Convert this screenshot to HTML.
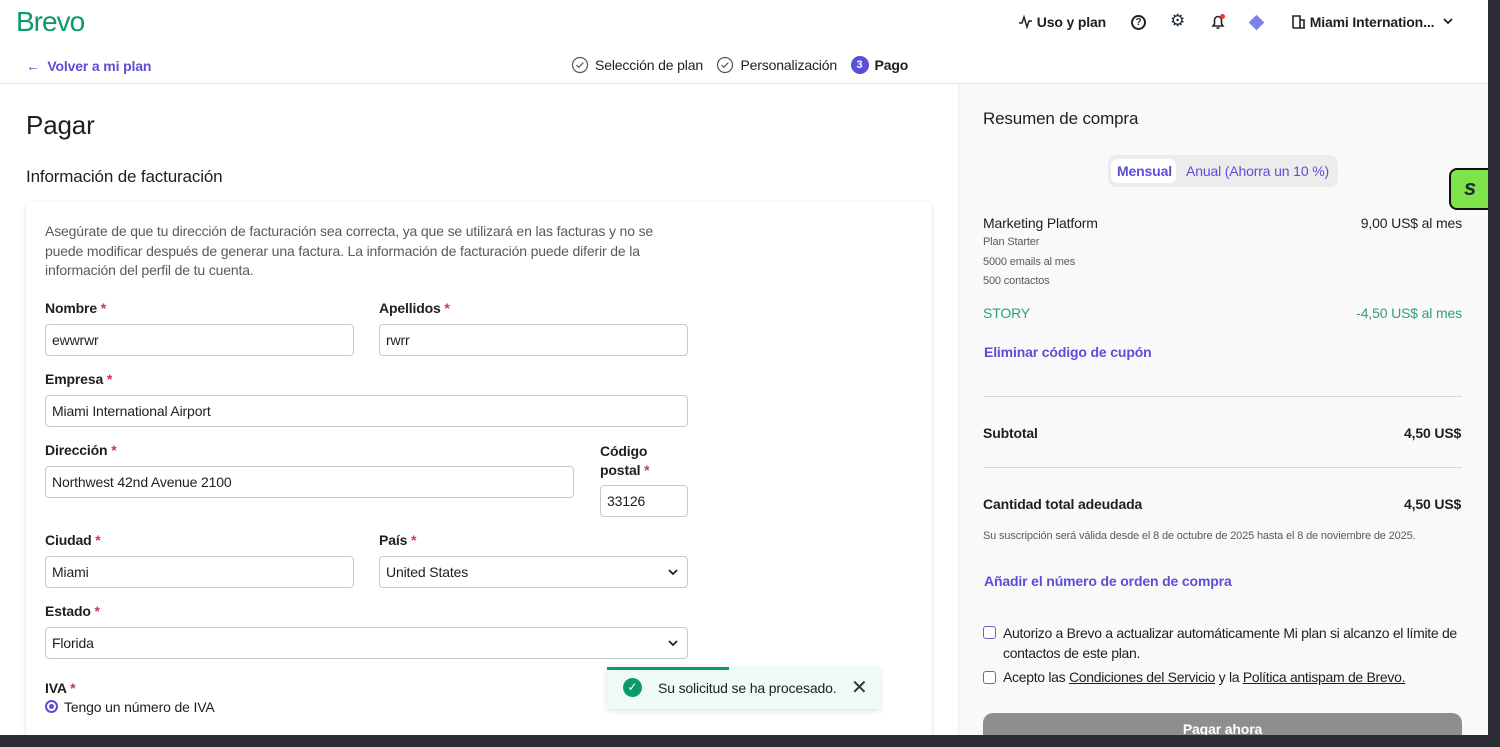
<!DOCTYPE html><html><head><meta charset="utf-8"><style>
*{box-sizing:border-box;margin:0;padding:0}
html,body{width:1500px;height:747px;overflow:hidden}
body{font-family:"Liberation Sans",sans-serif;color:#1f2937;background:#fff;position:relative;font-size:14px;letter-spacing:-0.15px}
.a{position:absolute}
.lbl{font-weight:bold;font-size:14px;color:#1f1f1f}
.lbl i{color:#d6334a;font-style:normal}
.inp{position:absolute;height:32px;border:1px solid #c9c9c9;border-radius:4px;padding:0 6px;line-height:30px;font-size:14px;color:#1f1f1f;background:#fff}
.chev{position:absolute;right:8px;top:9px}
.p{color:#5b4fd6;font-weight:bold}
</style></head><body>
<div class="a" style="left:16px;top:6px;font-size:28px;color:#0b996e;letter-spacing:-1px">Brevo</div>
<div class="a" style="left:26px;top:58px;font-size:14px" ><span class="p">&larr;&nbsp; Volver a mi plan</span></div>
<div class="a" style="left:571px;top:56px;font-size:14px;color:#1f1f1f;display:flex;align-items:center;gap:6px">
<svg width="18" height="18"><circle cx="9" cy="9" r="7.5" fill="none" stroke="#555" stroke-width="1.2"/><path d="M5.5 9l2.3 2.3 4.5-4.6" fill="none" stroke="#555" stroke-width="1.2"/></svg> Selección de plan&nbsp;&nbsp;
<svg width="18" height="18"><circle cx="9" cy="9" r="7.5" fill="none" stroke="#555" stroke-width="1.2"/><path d="M5.5 9l2.3 2.3 4.5-4.6" fill="none" stroke="#555" stroke-width="1.2"/></svg> Personalización&nbsp;&nbsp;
<span style="width:18px;height:18px;border-radius:9px;background:#5b4fd6;color:#fff;font-size:11px;font-weight:bold;text-align:center;line-height:18px">3</span> <b>Pago</b></div>
<div class="a" style="left:1018px;top:14px;font-size:14px;font-weight:bold;color:#1f1f1f"><svg width="15" height="14" style="vertical-align:-2px"><path d="M1 8h3l2-6 3 10 2-6h3" fill="none" stroke="#222" stroke-width="1.5"/></svg> Uso y plan</div>
<div class="a" style="left:1131px;top:15px;width:15px;height:15px;border:2px solid #222;border-radius:50%;font-size:10px;text-align:center;line-height:11px;font-weight:bold">?</div>
<div class="a" style="left:1170px;top:11px;font-size:17px">⚙</div>
<svg class="a" style="left:1210px;top:14px" width="16" height="16"><path d="M3 12h10l-1.5-2V6a3.5 3.5 0 0 0-7 0v4z" fill="none" stroke="#222" stroke-width="1.6"/><path d="M6.5 14h3" stroke="#222" stroke-width="1.6"/></svg>
<div class="a" style="left:1220px;top:14px;width:5px;height:5px;border-radius:3px;background:#e33"></div>
<div class="a" style="left:1251px;top:17px;width:11px;height:11px;background:#7b82f0;transform:rotate(45deg)"></div>
<div class="a" style="left:1292px;top:14px;font-size:14px;font-weight:bold;color:#1f1f1f"><svg width="14" height="14" style="vertical-align:-2px"><path d="M1 13V1h7v12M8 5h4v8M1 13h12" fill="none" stroke="#222" stroke-width="1.6"/></svg> Miami Internation... &nbsp;<svg width="12" height="12"><path d="M2 4l4 4 4-4" fill="none" stroke="#222" stroke-width="1.8"/></svg></div>
<div class="a" style="left:0;top:83px;width:1488px;height:1px;background:#e2e2e2"></div>
<div class="a" style="left:958px;top:84px;width:530px;height:651px;background:#f9f9f9;border-left:1px solid #ececec"></div>
<div class="a" style="left:26px;top:110px;font-size:26px;color:#1f1f1f">Pagar</div>
<div class="a" style="left:26px;top:167px;font-size:17px;color:#1f1f1f">Información de facturación</div>
<div class="a" style="left:26px;top:202px;width:906px;height:540px;background:#fff;border-radius:6px;box-shadow:0 1px 4px rgba(0,0,0,.15)"></div>
<div class="a" style="left:45px;top:222px;width:620px;font-size:14px;line-height:19.5px;color:#5a5a5a">Asegúrate de que tu dirección de facturación sea correcta, ya que se utilizará en las facturas y no se puede modificar después de generar una factura. La información de facturación puede diferir de la información del perfil de tu cuenta.</div>
<div class="a lbl" style="left:45px;top:300px">Nombre <i>*</i></div>
<div class="inp" style="left:45px;top:324px;width:309px">ewwrwr</div>
<div class="a lbl" style="left:379px;top:300px">Apellidos <i>*</i></div>
<div class="inp" style="left:379px;top:324px;width:309px">rwrr</div>
<div class="a lbl" style="left:45px;top:371px">Empresa <i>*</i></div>
<div class="inp" style="left:45px;top:395px;width:643px">Miami International Airport</div>
<div class="a lbl" style="left:45px;top:442px">Dirección <i>*</i></div>
<div class="inp" style="left:45px;top:466px;width:529px">Northwest 42nd Avenue 2100</div>
<div class="a lbl" style="left:600px;top:442px;line-height:19px">Código<br>postal <i>*</i></div>
<div class="inp" style="left:600px;top:485px;width:88px">33126</div>
<div class="a lbl" style="left:45px;top:532px">Ciudad <i>*</i></div>
<div class="inp" style="left:45px;top:556px;width:309px">Miami</div>
<div class="a lbl" style="left:379px;top:532px">País <i>*</i></div>
<div class="inp" style="left:379px;top:556px;width:309px">United States<svg class="chev" width="12" height="12"><path d="M2 4l4 4 4-4" fill="none" stroke="#222" stroke-width="1.8"/></svg></div>
<div class="a lbl" style="left:45px;top:603px">Estado <i>*</i></div>
<div class="inp" style="left:45px;top:627px;width:643px">Florida<svg class="chev" width="12" height="12"><path d="M2 4l4 4 4-4" fill="none" stroke="#222" stroke-width="1.8"/></svg></div>
<div class="a lbl" style="left:45px;top:680px">IVA <i>*</i></div>
<div class="a" style="left:45px;top:700px;width:13px;height:13px;border:2px solid #5b4fd6;border-radius:50%;padding:2px"><div style="width:5px;height:5px;background:#5b4fd6;border-radius:50%"></div></div>
<div class="a" style="left:64px;top:699px;font-size:14px;color:#1f1f1f">Tengo un número de IVA</div>
<div class="a" style="left:607px;top:667px;width:273px;height:42px;background:#eefaf5;box-shadow:0 2px 6px rgba(0,0,0,.12)"></div>
<div class="a" style="left:607px;top:667px;width:122px;height:3px;background:#0b996e"></div>
<div class="a" style="left:623px;top:678px;width:19px;height:19px;border-radius:50%;background:#0b996e;color:#fff;text-align:center;font-size:12px;line-height:19px">✓</div>
<div class="a" style="left:658px;top:680px;font-size:14px;color:#1f1f1f">Su solicitud se ha procesado.</div>
<div class="a" style="left:851px;top:675px;font-size:20px;color:#333">✕</div>
<div class="a" style="left:983px;top:109px;font-size:17px;color:#1f1f1f">Resumen de compra</div>
<div class="a" style="left:1108px;top:155px;width:230px;height:32px;background:#ececec;border-radius:8px"></div>
<div class="a" style="left:1111px;top:159px;width:65px;height:24px;background:#fff;border-radius:6px"></div>
<div class="a p" style="left:1117px;top:163px;font-size:14px">Mensual</div>
<div class="a p" style="left:1186px;top:163px;font-weight:normal;font-size:14px">Anual (Ahorra un 10 %)</div>
<div class="a" style="left:1449px;top:168px;width:40px;height:42px;background:#7fe34c;border:2px solid #111;border-right:none;border-radius:8px 0 0 8px;font-weight:bold;font-style:italic;font-size:22px;text-align:center;line-height:36px">s</div>
<div class="a" style="left:983px;top:215px;font-size:14px;color:#1f1f1f">Marketing Platform</div>
<div class="a" style="left:1462px;top:215px;font-size:14px;color:#1f1f1f;transform:translateX(-100%);white-space:nowrap">9,00 US$ al mes</div>
<div class="a" style="left:983px;top:233px;font-size:11px;line-height:19.5px;color:#5a5a5a">Plan Starter<br>5000 emails al mes<br>500 contactos</div>
<div class="a" style="left:983px;top:305px;font-size:14px;color:#2aa37a">STORY</div>
<div class="a" style="left:1462px;top:305px;font-size:14px;color:#2aa37a;transform:translateX(-100%);white-space:nowrap">-4,50 US$ al mes</div>
<div class="a p" style="left:984px;top:344px">Eliminar código de cupón</div>
<div class="a" style="left:983px;top:396px;width:479px;height:1px;background:#d9d9d9"></div>
<div class="a lbl" style="left:983px;top:425px">Subtotal</div>
<div class="a lbl" style="left:1404px;top:425px">4,50 US$</div>
<div class="a" style="left:983px;top:467px;width:479px;height:1px;background:#d9d9d9"></div>
<div class="a lbl" style="left:983px;top:496px">Cantidad total adeudada</div>
<div class="a lbl" style="left:1404px;top:496px">4,50 US$</div>
<div class="a" style="left:983px;top:530px;font-size:11px;color:#5a5a5a">Su suscripción será válida desde el 8 de octubre de 2025 hasta el 8 de noviembre de 2025.</div>
<div class="a p" style="left:984px;top:573px">Añadir el número de orden de compra</div>
<div class="a" style="left:983px;top:626px;width:13px;height:13px;border:1.5px solid #6b63c9;border-radius:3px;background:#fff"></div>
<div class="a" style="left:1003px;top:624px;width:460px;font-size:14px;line-height:19.5px;color:#1f1f1f;letter-spacing:-0.3px">Autorizo a Brevo a actualizar automáticamente Mi plan si alcanzo el límite de contactos de este plan.</div>
<div class="a" style="left:983px;top:671px;width:13px;height:13px;border:1.5px solid #6b63c9;border-radius:3px;background:#fff"></div>
<div class="a" style="left:1003px;top:669px;font-size:14px;color:#1f1f1f;letter-spacing:-0.3px">Acepto las <u>Condiciones del Servicio</u> y la <u>Política antispam de Brevo.</u></div>
<div class="a" style="left:983px;top:713px;width:479px;height:22px;background:#8e8e8e;border-radius:10px 10px 0 0;color:#fff;font-weight:bold;text-align:center;line-height:32px;font-size:14px;overflow:hidden">Pagar ahora</div>
<div class="a" style="left:1488px;top:0;width:12px;height:747px;background:#2b2e36"></div>
<div class="a" style="left:0;top:735px;width:1500px;height:12px;background:#2b2e36"></div>
</body></html>
